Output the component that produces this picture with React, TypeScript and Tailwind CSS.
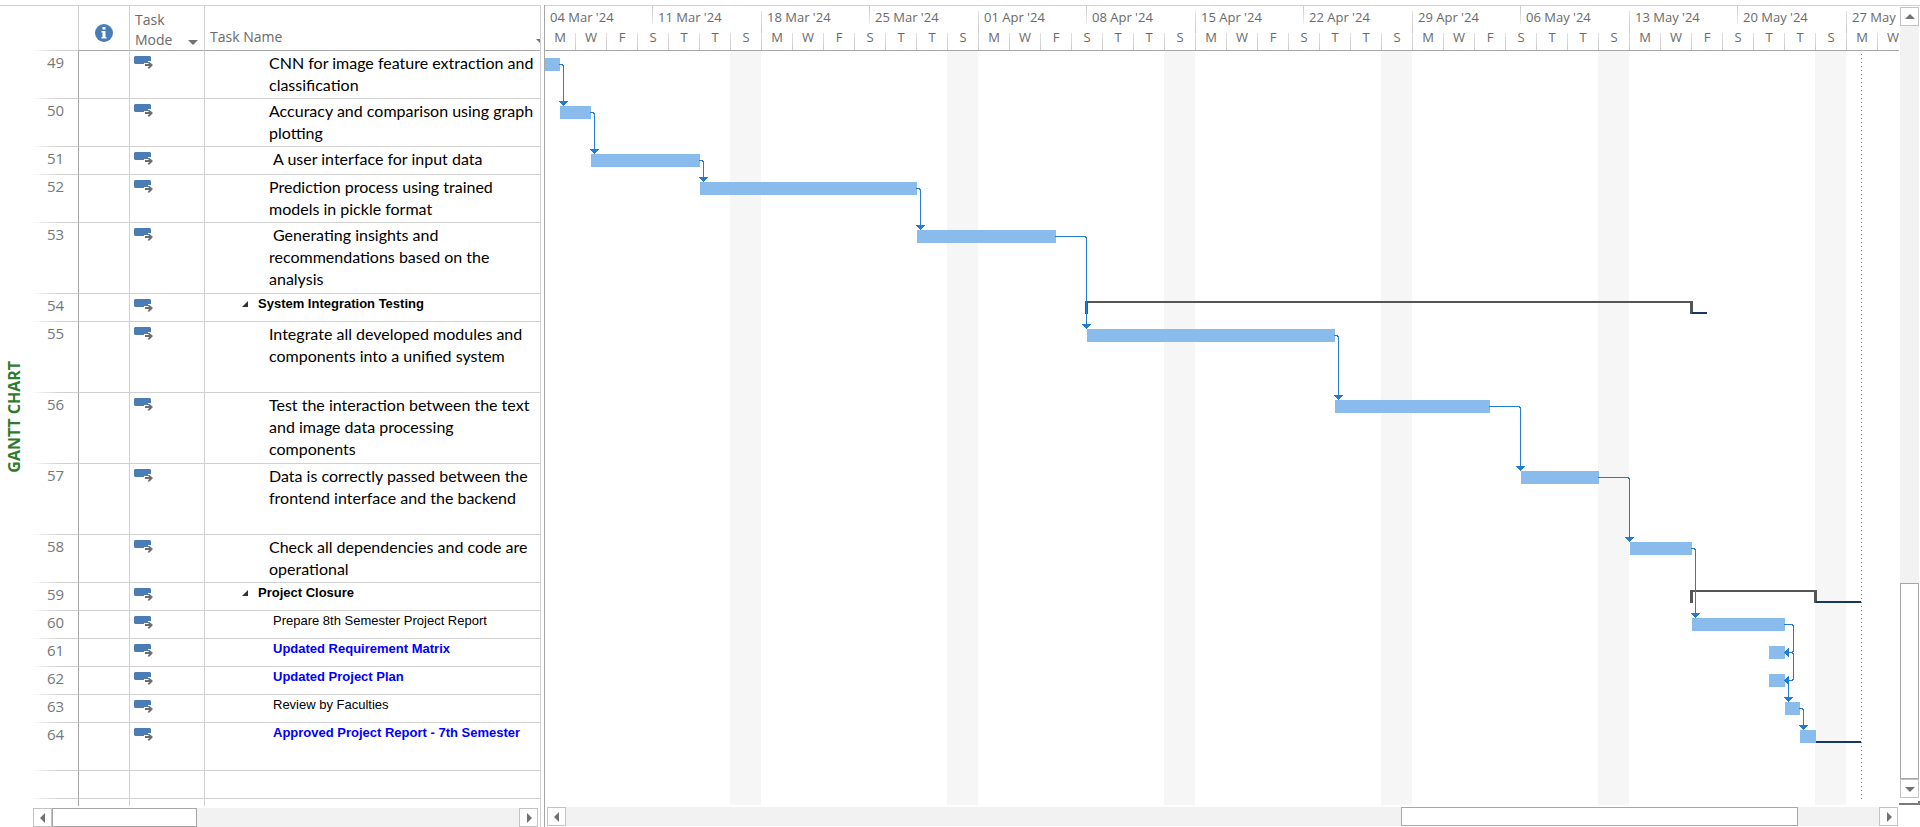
import React from "react";

type Kind = "text" | "group" | "small" | "milestone";
type Task = { id: number; h: number; lines: string[]; kind: Kind; lead?: boolean };

const tasks: Task[] = [
  { id: 49, h: 48, lines: ["CNN for image feature extraction and", "classification"], kind: "text" },
  { id: 50, h: 48, lines: ["Accuracy and comparison using graph", "plotting"], kind: "text" },
  { id: 51, h: 28, lines: ["A user interface for input data"], kind: "text", lead: true },
  { id: 52, h: 48, lines: ["Prediction process using trained", "models in pickle format"], kind: "text" },
  { id: 53, h: 71, lines: ["Generating insights and", "recommendations based on the", "analysis"], kind: "text", lead: true },
  { id: 54, h: 28, lines: ["System Integration Testing"], kind: "group" },
  { id: 55, h: 71, lines: ["Integrate all developed modules and", "components into a unified system"], kind: "text" },
  { id: 56, h: 71, lines: ["Test the interaction between the text", "and image data processing", "components"], kind: "text" },
  { id: 57, h: 71, lines: ["Data is correctly passed between the", "frontend interface and the backend"], kind: "text" },
  { id: 58, h: 48, lines: ["Check all dependencies and code are", "operational"], kind: "text" },
  { id: 59, h: 28, lines: ["Project Closure"], kind: "group" },
  { id: 60, h: 28, lines: ["Prepare 8th Semester Project Report"], kind: "small" },
  { id: 61, h: 28, lines: ["Updated Requirement Matrix"], kind: "milestone" },
  { id: 62, h: 28, lines: ["Updated Project Plan"], kind: "milestone" },
  { id: 63, h: 28, lines: ["Review by Faculties"], kind: "small" },
  { id: 64, h: 48, lines: ["Approved Project Report - 7th Semester"], kind: "milestone" },
];

const weeks = [
  "04 Mar '24", "11 Mar '24", "18 Mar '24", "25 Mar '24", "01 Apr '24", "08 Apr '24", "15 Apr '24",
  "22 Apr '24", "29 Apr '24", "06 May '24", "13 May '24", "20 May '24", "27 May '24",
];
const fortnights = weeks.filter((_, i) => i % 2 === 0).map((w, i) => [w, weeks[i * 2 + 1]]);
const days = ["M", "W", "F", "S", "T", "T", "S"];

// Chart coordinates: origin is the top-left corner of the chart body.
const bars = [
  [0, 7, 15], [15, 55, 31], [46, 103, 109], [155, 131, 217], [372, 179, 139], [542, 278, 248],
  [790, 349, 155], [976, 420, 78], [1085, 491, 62], [1147, 567, 93], [1224, 595, 16], [1224, 623, 16],
  [1240, 651, 15], [1255, 679, 16],
];
// start x, start y, drop x, arrow tip y
const links = [
  [14, 13, 18, 55], [45, 61, 49, 103], [154, 109, 158, 131], [371, 137, 375, 179], [510, 185, 541, 278],
  [789, 284, 793, 349], [944, 355, 975, 420], [1053, 426, 1084, 491], [1146, 497, 1150, 567], [1254, 657, 1258, 679],
];
const weekends = [185, 402, 619, 836, 1053, 1270];

function ModeIcon() {
  return (
    <svg width="21" height="14" viewBox="0 0 21 14" className="block" aria-hidden="true">
      <path d="M2 0h15l1 1v7H2L1 7V1z" fill="#4a7db5" />
      <path d="M11 7h4V5h2.500l3.500 4-3.500 4H15v-2h-4z" fill="#fff" />
      <path d="M12 8h4L14.500 6h2l3.500 3-3.500 3.500h-2l1.500-2.500h-4z" fill="#6e6e6e" />
    </svg>
  );
}

function Triangle({ dir }: { dir: "left" | "right" | "up" | "down" }) {
  const d = {
    left: "M8 1v10L3 6z",
    right: "M4 1v10l5-5z",
    up: "M1 8h10L6 3z",
    down: "M1 4h10L6 9z",
  }[dir];
  return (
    <svg width="12" height="12" viewBox="0 0 12 12" aria-hidden="true">
      <path d={d} fill="#6f7174" />
    </svg>
  );
}

function ScrollButton({ dir, label }: { dir: "left" | "right" | "up" | "down"; label: string }) {
  return (
    <button aria-label={label} className="flex h-[19px] w-[19px] shrink-0 items-center justify-center border border-[#c3c3c3] bg-white">
      <Triangle dir={dir} />
    </button>
  );
}

const nameStyle: Record<Kind, string> = {
  text: "pl-[64px] pt-px font-[Lato] text-[16px] leading-[22px] text-black",
  group: "pl-[53px] pt-[2px] font-['Liberation_Sans'] text-[13px] leading-[16px] font-bold text-black",
  small: "pl-[68px] pt-[2px] font-['Liberation_Sans'] text-[13px] leading-[16px] text-black",
  milestone: "pl-[68px] pt-[2px] font-['Liberation_Sans'] text-[13px] leading-[16px] font-bold text-[#0000ff]",
};

function RowRule() {
  return <div className="h-px bg-linear-to-r from-transparent to-[#d0d0d0] to-60%" />;
}

function TaskTable() {
  return (
    <table className="w-full table-fixed border-separate border-spacing-0 text-left">
      <colgroup>
        <col className="w-[47px]" />
        <col className="w-[51px]" />
        <col className="w-[75px]" />
        <col />
      </colgroup>
      <thead>
        <tr className="h-[45px] text-[14px] leading-[20px] text-[#6a6a6a]">
          <th className="p-0 align-bottom"><RowRule /></th>
          <th className="border-b border-l border-b-[#a6a6a6] border-l-[#d0d0d0] p-0">
            <svg width="18" height="18" viewBox="0 0 18 18" className="ml-[16px] mt-[10px]" role="img" aria-label="Indicators">
              <circle cx="9" cy="9" r="9" fill="#4a7db5" />
              <path d="M7.500 3h3v2.500h-3zM6.500 7h4v6h1v1.500h-5V13h1V8.500h-1z" fill="#fff" />
            </svg>
          </th>
          <th className="border-b border-l border-b-[#a6a6a6] border-l-[#d0d0d0] p-0 font-normal">
            <div className="flex items-end justify-between pt-[4px] pl-[5px] pr-[5px]">
              <span>Task<br />Mode</span>
              <button aria-label="Filter task mode" className="pb-[2px]"><Triangle dir="down" /></button>
            </div>
          </th>
          <th className="border-b border-l border-b-[#a6a6a6] border-l-[#d0d0d0] p-0 align-bottom font-normal">
            <div className="flex items-end justify-between overflow-hidden pb-[3px] pl-[5px]">
              <span>Task Name</span>
              <button aria-label="Filter task name" className="-mr-[7px]"><Triangle dir="down" /></button>
            </div>
          </th>
        </tr>
      </thead>
      <tbody>
        {tasks.map((t) => (
          <tr key={t.id} style={{ height: t.h }}>
            <td className="p-0 align-top">
              <div className="flex flex-col justify-between" style={{ height: t.h }}>
                <span className="pl-[16px] pt-px text-[15px] leading-[20px] text-[#74777b]">{t.id}</span>
                <RowRule />
              </div>
            </td>
            <td className="border-b border-l border-b-[#d0d0d0] border-l-[#a6a6a6] p-0" />
            <td className="border-b border-l border-[#d0d0d0] p-0 pl-[3px] pt-[5px] align-top"><ModeIcon /></td>
            <td className="overflow-hidden border-b border-l border-[#d0d0d0] p-0 align-top whitespace-nowrap">
              <div className={nameStyle[t.kind]}>
                <div className="flex">
                  {t.kind === "group" && (
                    <svg width="6" height="6" viewBox="0 0 6 6" className="-ml-[16px] mr-[10px] mt-[5px] shrink-0" aria-hidden="true">
                      <path d="M6 0v6H0z" fill="#333" />
                    </svg>
                  )}
                  <span className={t.lead ? "pl-[4px]" : ""}>{t.lines[0]}</span>
                </div>
                {t.lines.slice(1).map((l) => <div key={l}>{l}</div>)}
              </div>
            </td>
          </tr>
        ))}
        <tr className="h-[28px]">
          <td className="p-0 align-bottom"><RowRule /></td>
          <td className="border-b border-l border-b-[#d0d0d0] border-l-[#a6a6a6] p-0" />
          <td className="border-b border-l border-[#d0d0d0] p-0" />
          <td className="border-b border-l border-[#d0d0d0] p-0" />
        </tr>
        <tr className="h-[7px]">
          <td className="p-0" />
          <td className="border-l border-l-[#a6a6a6] p-0" />
          <td className="border-l border-[#d0d0d0] p-0" />
          <td className="border-l border-[#d0d0d0] p-0" />
        </tr>
      </tbody>
    </table>
  );
}

function Timescale() {
  return (
    <div className="flex h-[45px] overflow-hidden border-b border-[#a6a6a6] text-[13px] text-[#6a6a6a]">
      {fortnights.map(([a, b]) => (
        <div key={a} className="flex w-[217px] shrink-0">
          <div className="flex w-full flex-col">
            <div className="flex h-[27px] leading-[22px]">
              <div className="w-[107px] pl-[5px]">{a}</div>
              {b && (
                <>
                  <div className="h-[18px] w-px bg-linear-to-b from-[#c8c8c8] to-[#eeeeee]" />
                  <div className="grow pl-[5px]">{b}</div>
                </>
              )}
              <div className="mt-[5px] w-px bg-linear-to-b from-[#e4e4e4] to-[#c8c8c8]" hidden={!b} />
            </div>
            <div className="flex h-[17px] text-center leading-[8px]">
              {days.map((d, i) => (
                <React.Fragment key={i}>
                  <div className="w-[30px]">{d}</div>
                  <div className="w-px bg-linear-to-b from-[#e0e0e0] to-[#c8c8c8]" />
                </React.Fragment>
              ))}
            </div>
          </div>
        </div>
      ))}
    </div>
  );
}

function Chart() {
  return (
    <svg className="block h-[754px] w-full" role="img" aria-label="Gantt chart" shapeRendering="crispEdges">
      {weekends.map((x) => <rect key={x} x={x} y="0" width="31" height="754" fill="#f6f6f6" />)}
      <path d="M1316.500 3V750" stroke="#808080" strokeDasharray="1 3" />
      {bars.map(([x, y, w]) => <rect key={`${x}-${y}`} x={x} y={y} width={w} height="13" fill="#8abbed" />)}
      <g fill="#555">
        <path d="M540 250h608v13h-3v-11H543v11h-3z" />
        <path d="M1145 539h127v13h-3v-11h-121v11h-3z" />
      </g>
      <g fill="#17375e">
        <rect x="1147" y="261" width="15" height="2" />
        <rect x="1271" y="550" width="45" height="2" />
        <rect x="1271" y="690" width="45" height="2" />
      </g>
      <g stroke="#247bd2" fill="none">
        {links.map(([x, y, dx, tip]) => (
          <path key={x} d={`M${x} ${y + 0.5}H${dx - 1}l1.500 1.500V${tip - 4}`} />
        ))}
        <path d="M1239 573.500h8l1.500 1.500V600l-1.500 1.500h-4" />
        <path d="M1247 601.500l1.500 1.500V628l-1.500 1.500h-4" />
        <path d="M1243.500 630V648" />
      </g>
      <g fill="#247bd2">
        {links.map(([x, , dx, tip]) => <path key={x} d={`M${dx - 4} ${tip - 5}h9L${dx + 0.5} ${tip}z`} />)}
        <path d="M1239 646h9l-4.500 5z" />
        <path d="M1244 597v9l-5-4.500z" />
        <path d="M1244 625v9l-5-4.500z" />
      </g>
    </svg>
  );
}

export default function App() {
  return (
    <main className="flex w-full overflow-hidden bg-white pt-[5px] font-['Open_Sans','Noto_Sans',sans-serif]">
      <aside className="flex w-[31px] shrink-0 items-center justify-center border-t border-[#d0d0d0] pr-[3px]">
        <h1 className="rotate-180 text-[16px] leading-[20px] font-bold text-[#2e7a2e] [writing-mode:vertical-rl]">GANTT CHART</h1>
      </aside>

      <section className="w-[510px] shrink-0 border-t border-r border-[#d0d0d0]" aria-label="Task list">
        <TaskTable />
        <div className="flex h-[21px] pt-[2px] pl-[2px] pr-[2px]">
          <ScrollButton dir="left" label="Scroll tasks left" />
          <div className="grow bg-[#f2f2f2]">
            <div className="h-[19px] w-[31%] border border-[#a6a6a6] bg-white" />
          </div>
          <ScrollButton dir="right" label="Scroll tasks right" />
        </div>
      </section>

      <section className="ml-[3px] flex min-w-0 grow border-l border-l-[#a6a6a6]" aria-label="Timeline">
        <div className="min-w-0 grow border-t border-t-[#d0d0d0]">
          <Timescale />
          <Chart />
          <div className="flex h-[21px] pt-[2px] pl-[2px]">
            <ScrollButton dir="left" label="Scroll chart left" />
            <div className="flex grow justify-end bg-[#f2f2f2]">
              <div className="h-[19px] w-[30.200%] border border-[#a6a6a6] bg-white" />
              <div className="w-[6.200%]" />
            </div>
            <ScrollButton dir="right" label="Scroll chart right" />
            <div className="w-px" />
          </div>
        </div>
        <div className="flex w-[21px] shrink-0 flex-col border-t border-t-[#d0d0d0]">
          <div className="mt-px flex h-[791px] flex-col px-px">
            <ScrollButton dir="up" label="Scroll up" />
            <div className="flex grow flex-col justify-end bg-[#f2f2f2]">
              <div className="h-[26%] w-[19px] border border-[#a6a6a6] bg-white" />
            </div>
            <ScrollButton dir="down" label="Scroll down" />
          </div>
          <div className="mt-[3px] h-[4px] border-r-2 border-b-2 border-[#7a7a7a]" />
        </div>
      </section>
    </main>
  );
}
